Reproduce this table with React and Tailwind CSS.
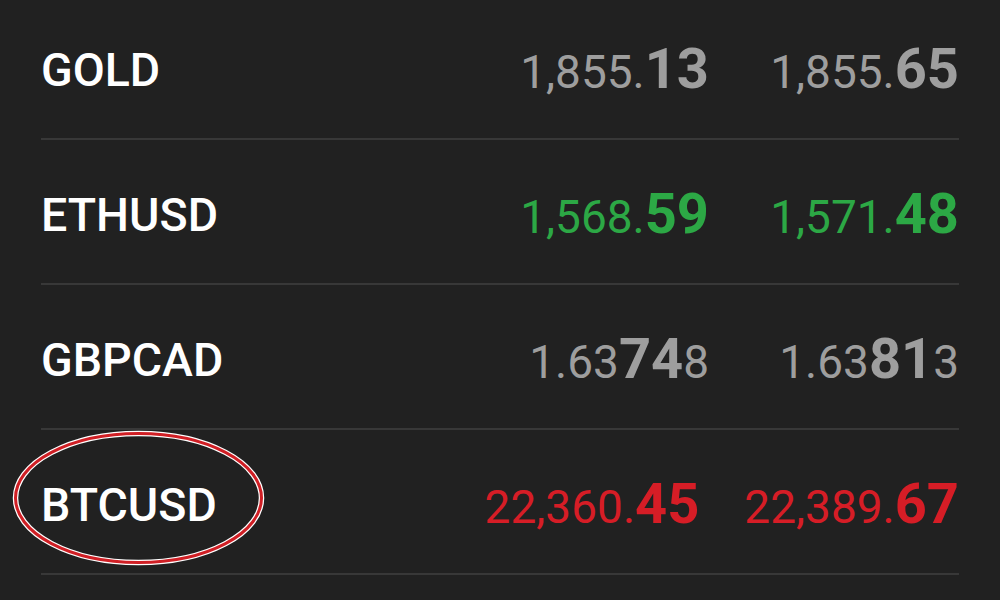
const ROWS = [
  { symbol: 'GOLD', tone: 'gray', bid: ['1,855.', '13', ''], ask: ['1,855.', '65', ''] },
  { symbol: 'ETHUSD', tone: 'green', bid: ['1,568.', '59', ''], ask: ['1,571.', '48', ''] },
  { symbol: 'GBPCAD', tone: 'gray', bid: ['1.63', '74', '8'], ask: ['1.63', '81', '3'] },
  { symbol: 'BTCUSD', tone: 'red', bid: ['22,360.', '45', ''], ask: ['22,389.', '67', ''], circled: true },
]

const TONES = {
  gray: 'text-[#9e9e9e]',
  green: 'text-[#2ca845]',
  red: 'text-[#d61d26]',
}

function Price({ parts, tone }) {
  const [head, big, tail] = parts
  return (
    <span className={`whitespace-nowrap leading-none ${TONES[tone]}`}>
      <span className="text-[46px] font-normal">{head}</span>
      <span className="text-[56px] font-bold">{big}</span>
      {tail && <span className="text-[46px] font-normal">{tail}</span>}
    </span>
  )
}

// red annotation ring drawn over the row
function Circle() {
  return (
    <svg className="absolute left-[-29px] top-0 pointer-events-none" width="253" height="136" viewBox="0 0 253 136">
      <ellipse cx="126.5" cy="68" rx="123" ry="64.5" fill="none" stroke="#ffffff" strokeWidth="5.5" />
      <ellipse cx="126.5" cy="68" rx="123" ry="64.5" fill="none" stroke="#d01f25" strokeWidth="3" />
    </svg>
  )
}

export default function App() {
  return (
    <div className="w-[1000px] h-[600px] overflow-hidden bg-[#212121] px-[41px]" style={{ fontFamily: 'Roboto, "Liberation Sans", sans-serif' }}>
      <div className="-mt-[5px]">
        {ROWS.map((row) => (
          <div key={row.symbol} className="relative h-[145px] border-b-2 border-[#383838] flex items-center pt-[4px]">
            <div className="flex-1 flex">
              <span className="text-[46.5px] font-medium text-white leading-none pt-[3px]">
                {row.symbol}
              </span>
            </div>
            <div className="flex items-baseline gap-[45px]">
              <Price parts={row.bid} tone={row.tone} />
              <div className="min-w-[205px] text-right">
                <Price parts={row.ask} tone={row.tone} />
              </div>
            </div>
            {row.circled && <Circle />}
          </div>
        ))}
      </div>
    </div>
  )
}
